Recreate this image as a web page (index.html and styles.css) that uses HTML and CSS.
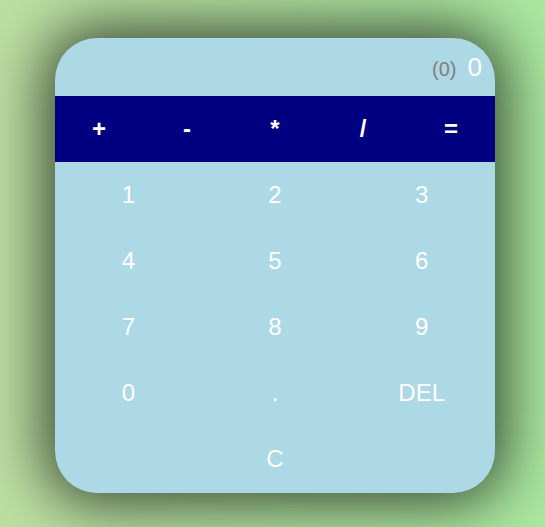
FILE: index.html
```html
<!DOCTYPE html>
<html>
<head>
<meta charset="utf-8">
<link rel="stylesheet" href="styles.css">
</head>
<body>
<div class="page">
  <div class="calc">
    <div class="display">
      <span class="prev">(0)</span>
      <span class="cur">0</span>
    </div>
    <div class="ops">
      <button class="op">+</button>
      <button class="op">-</button>
      <button class="op">*</button>
      <button class="op">/</button>
      <button class="op">=</button>
    </div>
    <div class="keys">
      <button class="key">1</button>
      <button class="key">2</button>
      <button class="key">3</button>
      <button class="key">4</button>
      <button class="key">5</button>
      <button class="key">6</button>
      <button class="key">7</button>
      <button class="key">8</button>
      <button class="key">9</button>
      <button class="key">0</button>
      <button class="key">.</button>
      <button class="key">DEL</button>
      <button class="key wide">C</button>
    </div>
  </div>
</div>
</body>
</html>
```
FILE: styles.css
```css
html, body {
  margin: 0;
  padding: 0;
  height: 100%;
}
body {
  background: linear-gradient(to right, #bcdfa2, #a9e89f);
  font-family: "Liberation Sans", Arial, sans-serif;
}
.page {
  padding: 38px 0 0 55px;
}
.calc {
  width: 440px;
  height: 455px;
  background: #add8e6;
  border-radius: 42px;
  overflow: hidden;
  box-shadow: 0 0 60px 10px rgba(0, 0, 0, 0.7);
  display: flex;
  flex-direction: column;
}
.display {
  height: 58px;
  display: flex;
  justify-content: flex-end;
  align-items: center;
  gap: 11px;
  padding-right: 13px;
  box-sizing: border-box;
}
.prev {
  color: #808080;
  font-size: 20px;
  margin-top: 4px;
}
.cur {
  color: #ffffff;
  font-size: 26px;
}
.ops {
  height: 66px;
  background: #000080;
  display: grid;
  grid-template-columns: repeat(5, 1fr);
}
button {
  border: none;
  background: transparent;
  font-family: "Liberation Sans", Arial, sans-serif;
  color: #ffffff;
  padding: 0;
  margin: 0;
}
.op {
  font-size: 24px;
  font-weight: bold;
}
.keys {
  flex: 1;
  display: grid;
  grid-template-columns: repeat(3, 1fr);
  grid-auto-rows: 66px;
}
.key {
  font-size: 24px;
}
.wide {
  grid-column: 1 / 4;
}
```
